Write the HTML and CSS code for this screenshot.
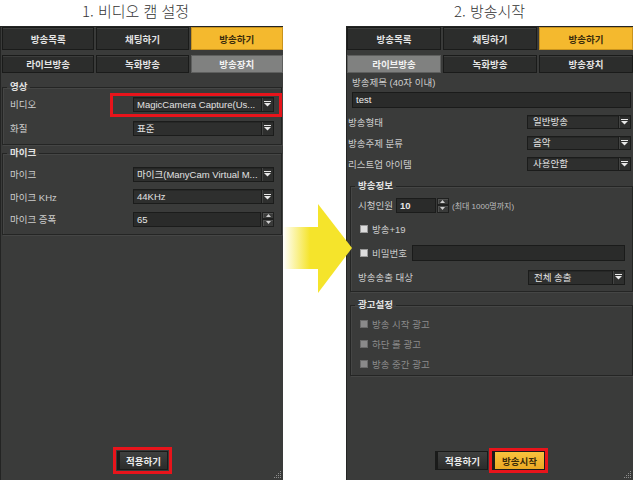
FILE: index.html
```html
<!DOCTYPE html>
<html lang="ko">
<head>
<meta charset="utf-8">
<title>방송 설정</title>
<link rel="stylesheet" href="styles.css">
</head>
<body>
<div class="stage">
  <section class="col col-left">
    <h2 class="title title-left">1. 비디오 캠 설정</h2>
    <div class="panel">
      <div class="tabs tabs-main">
        <div class="tab">방송목록</div>
        <div class="tab">채팅하기</div>
        <div class="tab tab-yellow">방송하기</div>
      </div>
      <div class="tabs tabs-sub">
        <div class="tab">라이브방송</div>
        <div class="tab">녹화방송</div>
        <div class="tab tab-gray">방송장치</div>
      </div>
      <div class="panel-body">
        <fieldset class="group group-video">
          <legend>영상</legend>
          <div class="rows rows-video">
            <div class="row row-hl">
              <span class="label">비디오</span>
              <div class="select sel-left"><span class="sel-text">MagicCamera Capture(Us...</span><span class="sel-btn"><svg class="tri" viewBox="0 0 7 6" width="7" height="6"><rect x="0" y="0" width="7" height="1" fill="#e8e8e8"/><polygon points="0,2 7,2 3.5,5.5" fill="#e8e8e8"/></svg></span></div>
            </div>
            <div class="row">
              <span class="label">화질</span>
              <div class="select sel-left"><span class="sel-text">표준</span><span class="sel-btn"><svg class="tri" viewBox="0 0 7 6" width="7" height="6"><rect x="0" y="0" width="7" height="1" fill="#e8e8e8"/><polygon points="0,2 7,2 3.5,5.5" fill="#e8e8e8"/></svg></span></div>
            </div>
          </div>
        </fieldset>
        <fieldset class="group group-mic">
          <legend>마이크</legend>
          <div class="rows rows-mic">
            <div class="row">
              <span class="label">마이크</span>
              <div class="select sel-left"><span class="sel-text">마이크(ManyCam Virtual M...</span><span class="sel-btn"><svg class="tri" viewBox="0 0 7 6" width="7" height="6"><rect x="0" y="0" width="7" height="1" fill="#e8e8e8"/><polygon points="0,2 7,2 3.5,5.5" fill="#e8e8e8"/></svg></span></div>
            </div>
            <div class="row">
              <span class="label">마이크 KHz</span>
              <div class="select sel-left"><span class="sel-text">44KHz</span><span class="sel-btn"><svg class="tri" viewBox="0 0 7 6" width="7" height="6"><rect x="0" y="0" width="7" height="1" fill="#e8e8e8"/><polygon points="0,2 7,2 3.5,5.5" fill="#e8e8e8"/></svg></span></div>
            </div>
            <div class="row">
              <span class="label">마이크 증폭</span>
              <div class="spinner sel-left">
                <span class="spin-input">65</span>
                <span class="spin-btns">
                  <span class="spin-b"><svg viewBox="0 0 5 3" width="5" height="3"><polygon points="0,3 5,3 2.5,0" fill="#cfcfcf"/></svg></span>
                  <span class="spin-b"><svg viewBox="0 0 5 3" width="5" height="3"><polygon points="0,0 5,0 2.5,3" fill="#cfcfcf"/></svg></span>
                </span>
              </div>
            </div>
          </div>
        </fieldset>
      </div>
      <div class="foot">
        <button class="btn btn-dark btn-hl-left">적용하기</button>
      </div>
      <svg class="grip" viewBox="0 0 9 9" width="9" height="9"><g fill="#8d8d8d"><rect x="7" y="1" width="1" height="1"/><rect x="5" y="3" width="1" height="1"/><rect x="7" y="3" width="1" height="1"/><rect x="3" y="5" width="1" height="1"/><rect x="5" y="5" width="1" height="1"/><rect x="7" y="5" width="1" height="1"/><rect x="1" y="7" width="1" height="1"/><rect x="3" y="7" width="1" height="1"/><rect x="5" y="7" width="1" height="1"/><rect x="7" y="7" width="1" height="1"/></g></svg>
    </div>
  </section>

  <section class="col col-right">
    <h2 class="title">2. 방송시작</h2>
    <div class="panel">
      <div class="tabs tabs-main">
        <div class="tab">방송목록</div>
        <div class="tab">채팅하기</div>
        <div class="tab tab-yellow">방송하기</div>
      </div>
      <div class="tabs tabs-sub">
        <div class="tab tab-gray">라이브방송</div>
        <div class="tab">녹화방송</div>
        <div class="tab">방송장치</div>
      </div>
      <div class="panel-body">
        <div class="caption">방송제목 (40자 이내)</div>
        <div class="textbox">test</div>
        <div class="rows rows-top">
          <div class="row">
            <span class="label">방송형태</span>
            <div class="select sel-right"><span class="sel-text">일반방송</span><span class="sel-btn"><svg class="tri" viewBox="0 0 7 6" width="7" height="6"><rect x="0" y="0" width="7" height="1" fill="#e8e8e8"/><polygon points="0,2 7,2 3.5,5.5" fill="#e8e8e8"/></svg></span></div>
          </div>
          <div class="row">
            <span class="label">방송주제 분류</span>
            <div class="select sel-right"><span class="sel-text">음악</span><span class="sel-btn"><svg class="tri" viewBox="0 0 7 6" width="7" height="6"><rect x="0" y="0" width="7" height="1" fill="#e8e8e8"/><polygon points="0,2 7,2 3.5,5.5" fill="#e8e8e8"/></svg></span></div>
          </div>
          <div class="row">
            <span class="label">리스트업 아이템</span>
            <div class="select sel-right"><span class="sel-text">사용안함</span><span class="sel-btn"><svg class="tri" viewBox="0 0 7 6" width="7" height="6"><rect x="0" y="0" width="7" height="1" fill="#e8e8e8"/><polygon points="0,2 7,2 3.5,5.5" fill="#e8e8e8"/></svg></span></div>
          </div>
        </div>

        <fieldset class="group group-info">
          <legend>방송정보</legend>
          <div class="rows rows-info">
            <div class="row">
              <span class="label">시청인원</span>
              <div class="spinner spin-small">
                <span class="spin-input spin-bold">10</span>
                <span class="spin-btns">
                  <span class="spin-b"><svg viewBox="0 0 5 3" width="5" height="3"><polygon points="0,3 5,3 2.5,0" fill="#cfcfcf"/></svg></span>
                  <span class="spin-b"><svg viewBox="0 0 5 3" width="5" height="3"><polygon points="0,0 5,0 2.5,3" fill="#cfcfcf"/></svg></span>
                </span>
              </div>
              <span class="note">(최대 1000명까지)</span>
            </div>
            <div class="row">
              <span class="check"></span><span class="label">방송+19</span>
            </div>
            <div class="row">
              <span class="check"></span><span class="label">비밀번호</span>
              <div class="textbox pw"></div>
            </div>
            <div class="row">
              <span class="label">방송송출 대상</span>
              <div class="select sel-info"><span class="sel-text">전체 송출</span><span class="sel-btn"><svg class="tri" viewBox="0 0 7 6" width="7" height="6"><rect x="0" y="0" width="7" height="1" fill="#e8e8e8"/><polygon points="0,2 7,2 3.5,5.5" fill="#e8e8e8"/></svg></span></div>
            </div>
          </div>
        </fieldset>

        <fieldset class="group group-ad">
          <legend>광고설정</legend>
          <div class="rows rows-ad">
            <div class="row row-off"><span class="check"></span><span class="label">방송 시작 광고</span></div>
            <div class="row row-off"><span class="check"></span><span class="label">하단 롤 광고</span></div>
            <div class="row row-off"><span class="check"></span><span class="label">방송 중간 광고</span></div>
          </div>
        </fieldset>
      </div>
      <div class="foot">
        <button class="btn btn-dark">적용하기</button>
        <button class="btn btn-yellow btn-hl-right">방송시작</button>
      </div>
      <svg class="grip" viewBox="0 0 9 9" width="9" height="9"><g fill="#8d8d8d"><rect x="7" y="1" width="1" height="1"/><rect x="5" y="3" width="1" height="1"/><rect x="7" y="3" width="1" height="1"/><rect x="3" y="5" width="1" height="1"/><rect x="5" y="5" width="1" height="1"/><rect x="7" y="5" width="1" height="1"/><rect x="1" y="7" width="1" height="1"/><rect x="3" y="7" width="1" height="1"/><rect x="5" y="7" width="1" height="1"/><rect x="7" y="7" width="1" height="1"/></g></svg>
    </div>
  </section>

  <svg class="arrow" viewBox="0 0 70 90" width="70" height="90">
    <defs>
      <linearGradient id="shaft" x1="0" y1="0" x2="1" y2="0">
        <stop offset="0" stop-color="#f5e42b" stop-opacity="0"/>
        <stop offset="0.75" stop-color="#f5e42b" stop-opacity="1"/>
        <stop offset="1" stop-color="#f5e42b" stop-opacity="1"/>
      </linearGradient>
    </defs>
    <rect x="0" y="23" width="36" height="42" fill="url(#shaft)"/>
    <polygon points="35,0 69,44 35,89" fill="#f5e42b"/>
  </svg>
</div>
</body>
</html>
```

FILE: styles.css
```css
* { box-sizing: border-box; }
html, body { margin: 0; padding: 0; }
body {
  background: #ffffff;
  font-family: "Liberation Sans", "Noto Sans CJK KR", sans-serif;
  font-size: 9.5px;
  color: #cdcdcd;
}
.stage {
  position: relative;
  display: flex;
  gap: 63px;
  width: 633px;
  height: 480px;
  overflow: hidden;
}
.col { display: flex; flex-direction: column; height: 480px; }
.col-left { width: 283px; }
.col-right { width: 287px; }

.title {
  margin: 0;
  height: 26px;
  font: 300 15px/22px "Noto Sans CJK KR", sans-serif;
  color: #333;
  text-align: center;
}
.title-left { padding-right: 12px; }

.panel {
  position: relative;
  flex: 1;
  display: flex;
  flex-direction: column;
  background: #3a3b3a;
  border-left: 1px solid #232423;
  border-top: 1px solid #232423;
}
.col-left .panel { padding-left: 1px; }

.tabs { display: grid; grid-template-columns: repeat(3, 1fr); gap: 2px; }
.tabs-main { height: 23px; }
.tabs-sub { height: 18px; margin-top: 5px; }
.tab {
  display: flex;
  align-items: center;
  justify-content: center;
  background: #2c2d2c;
  border: 1px solid #1a1b1a;
  box-shadow: inset 0 1px 0 #3c3d3c;
  color: #e4e4e4;
  font-weight: bold;
}
.tab-yellow { background: #f4b92e; color: #3a2c0c; box-shadow: none; border-color: #c9931c; }
.tab-gray { background: #808180; color: #f2f2f2; box-shadow: none; border-color: #5e5f5e; }

.panel-body { flex: 1; }
.col-left .panel-body { padding-right: 1px; }
.col-right .panel-body { padding: 0 2px 0 1px; }

.group {
  margin: 0;
  padding: 0 7px;
  min-inline-size: 0;
  border: 1px solid #242524;
  box-shadow: 1px 1px 0 #454645, inset 1px 1px 0 #454645;
}
.group legend {
  padding: 0 3px;
  margin-left: -3px;
  font-weight: bold;
  color: #e2e2e2;
  line-height: 14px;
}
.rows { display: flex; flex-direction: column; }
.row { position: relative; display: flex; align-items: center; height: 20px; }
.label { white-space: nowrap; }

.group-video { margin-top: 7px; padding-bottom: 6px; }
.rows-video { gap: 4px; }
.group-mic { margin-top: 1px; padding-top: 4px; padding-bottom: 5px; }
.rows-mic { gap: 2.5px; }

.row-hl::after {
  content: "";
  position: absolute;
  left: 100px;
  right: -8px;
  top: -1px;
  bottom: -3px;
  border: 3px solid #e8141b;
}

.select {
  display: flex;
  align-items: stretch;
  height: 15px;
  background: #2e2f2e;
  border: 1px solid #1b1c1b;
  box-shadow: inset 0 1px 0 #262726;
  color: #e2e2e2;
}
.sel-text { flex: 1; padding-left: 3px; line-height: 13px; white-space: nowrap; overflow: hidden; }
.sel-btn {
  width: 12px;
  display: flex;
  align-items: center;
  justify-content: center;
  border-left: 1px solid #1b1c1b;
  box-shadow: inset 1px 0 0 #444544;
}
.sel-left { margin-left: auto; width: 141px; }
.sel-right { margin-left: auto; width: 104px; height: 14px; }
.sel-right .sel-text { padding-left: 5px; line-height: 12px; }
.sel-info { margin-left: auto; width: 97px; height: 15px; }
.sel-info .sel-text { padding-left: 5px; }

.spinner { display: flex; height: 15px; }
.spin-input {
  flex: 1;
  background: #2a2b2a;
  border: 1px solid #1b1c1b;
  color: #e6e6e6;
  padding-left: 3px;
  line-height: 13px;
}
.spin-bold { font-weight: bold; }
.spin-btns { width: 12px; display: flex; flex-direction: column; margin-left: 1px; }
.spin-b {
  flex: 1;
  display: flex;
  align-items: center;
  justify-content: center;
  background: #3a3b3a;
  border: 1px solid #1f201f;
  box-shadow: inset 1px 1px 0 #515251;
}
.spin-small { width: 53px; margin-left: 3px; }
.note { margin-left: 3px; font-size: 8px; color: #bdbdbd; }

.caption { margin: 3px 0 0 4px; line-height: 14px; }
.textbox {
  height: 16px;
  background: #2a2b2a;
  border: 1px solid #1a1b1a;
  color: #efefef;
  padding-left: 3px;
  line-height: 14px;
}
.col-right .panel-body > .textbox { margin: 2px 0 0 4px; }
.rows-top { margin-top: 3px; }
.rows-top .row { height: 21px; }

.group-info { margin: 5px -2px 0 2px; padding-top: 1px; padding-bottom: 3px; }
.rows-info { gap: 2px; }
.rows-info .row { height: 22px; }
.check {
  width: 8px;
  height: 8px;
  margin: 0 4px 0 2px;
  background: #dcdcdc;
  border: 1px solid #9a9a9a;
}
.pw { flex: 1; margin-left: 5px; }

.group-ad { margin: 6px -2px 0 2px; padding-top: 2px; padding-bottom: 1px; }
.row-off .label { color: #8c8c8c; }
.row-off .check { background: #8a8a8a; border-color: #6a6a6a; }

.foot { display: flex; justify-content: center; gap: 4px; padding-bottom: 10px; }
.btn {
  width: 53px;
  height: 19px;
  padding: 0;
  font: bold 9.5px "Liberation Sans", "Noto Sans CJK KR", sans-serif;
  border: 1px solid #1a1b1a;
  border-left: 3px solid #1a1b1a;
}
.btn-dark { background: linear-gradient(#3f403f, #2b2c2b); color: #ececec; }
.btn-yellow { background: linear-gradient(#f7c23e, #eaa923); color: #3a2a08; }
.btn-hl-left { width: 51px; outline: 3px solid #e8141b; outline-offset: 1px; }
.btn-hl-right { outline: 3px solid #e8141b; outline-offset: 0; }

.grip { position: absolute; right: 1px; bottom: 1px; }

.arrow { position: absolute; left: 283px; top: 204px; }
```
